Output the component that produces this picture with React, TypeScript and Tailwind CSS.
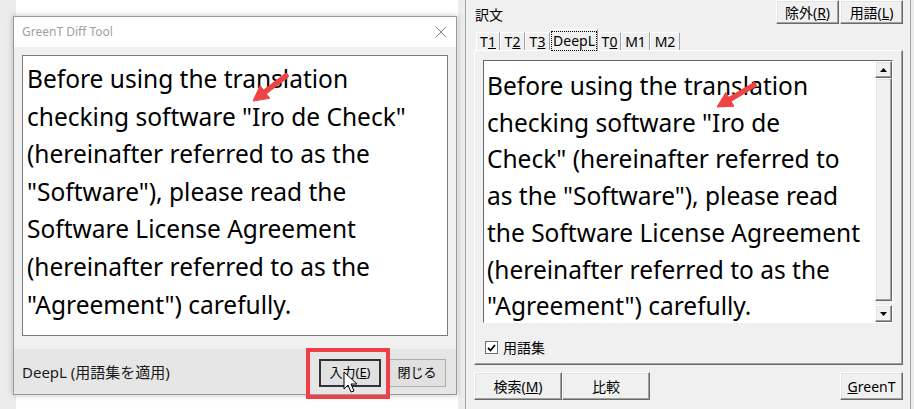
import React from "react";

const ui = { fontFamily: '"Noto Sans", "Noto Sans CJK JP", sans-serif' } as const;
const big = { fontFamily: '"Noto Sans", sans-serif' } as const;

function ClassicBtn({ children, className = "" }: { children: React.ReactNode; className?: string }) {
  return (
    <div
      className={
        "flex items-center justify-center bg-[#f0f0f0] border-t border-l border-t-white border-l-white border-r border-b border-r-[#696969] border-b-[#696969] shadow-[inset_-1px_-1px_0_#a0a0a0,inset_1px_1px_0_#e3e3e3] text-[14px] text-black " +
        className
      }
    >
      {children}
    </div>
  );
}

function Tab({ children, selected = false, w }: { children: React.ReactNode; selected?: boolean; w: string }) {
  return (
    <div
      className={
        "flex items-center justify-center bg-[#f0f0f0] border-t border-l border-t-white border-l-white border-r border-r-[#a0a0a0] text-[14px] leading-none " +
        w +
        (selected ? " h-[22px] -mb-px z-10 relative" : " h-[18px]")
      }
    >
      {selected ? (
        <span className="border border-dotted border-black px-[1px] py-[2px]">{children}</span>
      ) : (
        children
      )}
    </div>
  );
}

function Arrow({ x1, y1, x2, y2 }: { x1: number; y1: number; x2: number; y2: number }) {
  const dx = x2 - x1;
  const dy = y2 - y1;
  const len = Math.sqrt(dx * dx + dy * dy);
  const ux = dx / len;
  const uy = dy / len;
  const hl = 15;
  const hw = 8;
  const bx = x2 - ux * hl;
  const by = y2 - uy * hl;
  const px = -uy;
  const py = ux;
  return (
    <g>
      <line x1={x1} y1={y1} x2={bx + ux * 2} y2={by + uy * 2} stroke="#ef4444" strokeWidth={5.5} strokeLinecap="round" />
      <polygon
        points={`${x2},${y2} ${bx + px * hw},${by + py * hw} ${bx - px * hw},${by - py * hw}`}
        fill="#ef4444"
        stroke="#ef4444"
        strokeWidth={1}
        strokeLinejoin="round"
      />
    </g>
  );
}

const leftLines = [
  "Before using the translation",
  'checking software "Iro de Check"',
  "(hereinafter referred to as the",
  '"Software"), please read the',
  "Software License Agreement",
  "(hereinafter referred to as the",
  '"Agreement") carefully.',
];
const rightLines = [
  "Before using the translation",
  'checking software "Iro de',
  'Check" (hereinafter referred to',
  'as the "Software"), please read',
  "the Software License Agreement",
  "(hereinafter referred to as the",
  '"Agreement") carefully.',
];

export default function App() {
  return (
    <div className="relative w-[914px] h-[409px] flex overflow-hidden bg-[#ececec]" style={ui}>
      {/* left desktop area */}
      <div className="relative w-[465px] h-full bg-[#ececec]">
        <div className="ml-[16px] w-[442px] h-full bg-white" />
        {/* dialog window */}
        <div className="absolute left-[13px] top-[16px] w-[444px] h-[379px] border border-[#9a9a9a] shadow-[0_0_6px_rgba(0,0,0,0.25)] flex flex-col bg-[#f0f0f0]">
          <div className="h-[30px] bg-white flex items-center justify-between pl-[8px] pr-[9px]">
            <span className="text-[12px] text-[#a0a0a0]">GreenT Diff Tool</span>
            <svg width="12" height="12" viewBox="0 0 12 12">
              <path d="M0.5 0.5 L11.5 11.5 M11.5 0.5 L0.5 11.5" stroke="#808080" strokeWidth="1" />
            </svg>
          </div>
          <div className="flex-1 pt-[8px] px-[8px]">
            <div className="h-[281px] bg-white border border-[#7a7a7a] pl-[4px] pt-[4px] text-[24.5px] leading-[37.6px] text-black" style={big}>
              {leftLines.map((l, i) => (
                <div key={i} className="whitespace-pre">{l}</div>
              ))}
            </div>
          </div>
          <div className="h-[45px] bg-[#e6e6e6] flex items-center pl-[8px] pr-[10px]">
            <span className="text-[15px] text-[#1a1a1a] mt-[2px]">DeepL (用語集を適用)</span>
            <div className="ml-auto flex gap-[7px] mt-[3px]">
              <div className="w-[62px] h-[28px] bg-[#e1e1e1] border-2 border-[#333] flex items-center justify-center text-[13px]">
                入力(<span className="underline">E</span>)
              </div>
              <div className="w-[58px] h-[28px] bg-[#e1e1e1] border border-[#adadad] flex items-center justify-center text-[13px]">
                閉じる
              </div>
            </div>
          </div>
        </div>
      </div>

      {/* right window */}
      <div className="h-full w-[446px] border-l border-[#a0a0a0] border-r border-r-[#a0a0a0] bg-[#f0f0f0] flex flex-col pl-[8px] pr-[7px]">
        <div className="h-[29px] flex items-start">
          <span className="text-[14px] mt-[4px] ml-[1px]">訳文</span>
          <div className="ml-auto flex gap-[1px]">
            <ClassicBtn className="w-[63px] h-[24px]">
              除外(<span className="underline">R</span>)
            </ClassicBtn>
            <ClassicBtn className="w-[63px] h-[24px]">
              用語(<span className="underline">L</span>)
            </ClassicBtn>
          </div>
        </div>
        <div className="flex items-end h-[21px] pl-[2px]">
          <Tab w="w-[24px]">T<span className="underline">1</span></Tab>
          <Tab w="w-[25px]">T<span className="underline">2</span></Tab>
          <Tab w="w-[25px]">T<span className="underline">3</span></Tab>
          <Tab w="w-[48px]" selected>DeepL</Tab>
          <Tab w="w-[23px]">T<span className="underline">0</span></Tab>
          <Tab w="w-[29px]">M1</Tab>
          <Tab w="w-[30px]">M2</Tab>
        </div>
        <div className="h-[315px] border-t border-l border-t-white border-l-white border-r border-b border-r-[#696969] border-b-[#696969] shadow-[inset_-1px_-1px_0_#a0a0a0] pt-[9px] pl-[8px] pr-[9px]">
          <div className="h-[263px] flex border-t border-l border-t-[#696969] border-l-[#696969] border-r border-b border-r-white border-b-white">
            <div className="flex-1 bg-white pl-[3px] pt-[7px] text-[24.5px] leading-[36.7px] text-black overflow-hidden" style={big}>
              {rightLines.map((l, i) => (
                <div key={i} className="whitespace-pre">{l}</div>
              ))}
            </div>
            <div className="w-[17px] flex flex-col bg-[#f0f0f0]">
              <ClassicBtn className="h-[17px]">
                <svg width="7" height="4" viewBox="0 0 7 4"><polygon points="3.5,0 7,4 0,4" fill="#000" /></svg>
              </ClassicBtn>
              <div className="flex-1">
                <ClassicBtn className="h-[223px]">{""}</ClassicBtn>
              </div>
              <ClassicBtn className="h-[17px]">
                <svg width="7" height="4" viewBox="0 0 7 4"><polygon points="0,0 7,0 3.5,4" fill="#000" /></svg>
              </ClassicBtn>
            </div>
          </div>
          <div className="flex items-center mt-[14px] ml-[2px] gap-[5px]">
            <div className="w-[13px] h-[13px] bg-white border border-[#6e6e6e] flex items-center justify-center">
              <svg width="9" height="8" viewBox="0 0 9 8">
                <path d="M1 4 L3.5 6.5 L8 1" stroke="#000" strokeWidth="1.8" fill="none" />
              </svg>
            </div>
            <span className="text-[14px]">用語集</span>
          </div>
        </div>
        <div className="flex mt-[7px]">
          <ClassicBtn className="w-[88px] h-[28px]">
            検索(<span className="underline">M</span>)
          </ClassicBtn>
          <ClassicBtn className="w-[88px] h-[28px]">比較</ClassicBtn>
          <ClassicBtn className="w-[63px] h-[28px] ml-auto">
            <span className="underline">G</span>reenT
          </ClassicBtn>
        </div>
      </div>

      {/* annotations */}
      <div className="absolute left-[306px] top-[348px] w-[84px] h-[51px] border-[4px] border-[#ef3f47] pointer-events-none" />
      <svg className="absolute left-0 top-0 pointer-events-none" width="914" height="409">
        <Arrow x1={286} y1={76} x2={253} y2={101} />
        <Arrow x1={754} y1={85} x2={717} y2={107} />
        <polygon
          points="344,372 344,389 348,385 351,392 354,391 351,384 357,384"
          fill="#fff"
          stroke="#000"
          strokeWidth="1"
          strokeLinejoin="round"
        />
      </svg>
    </div>
  );
}
